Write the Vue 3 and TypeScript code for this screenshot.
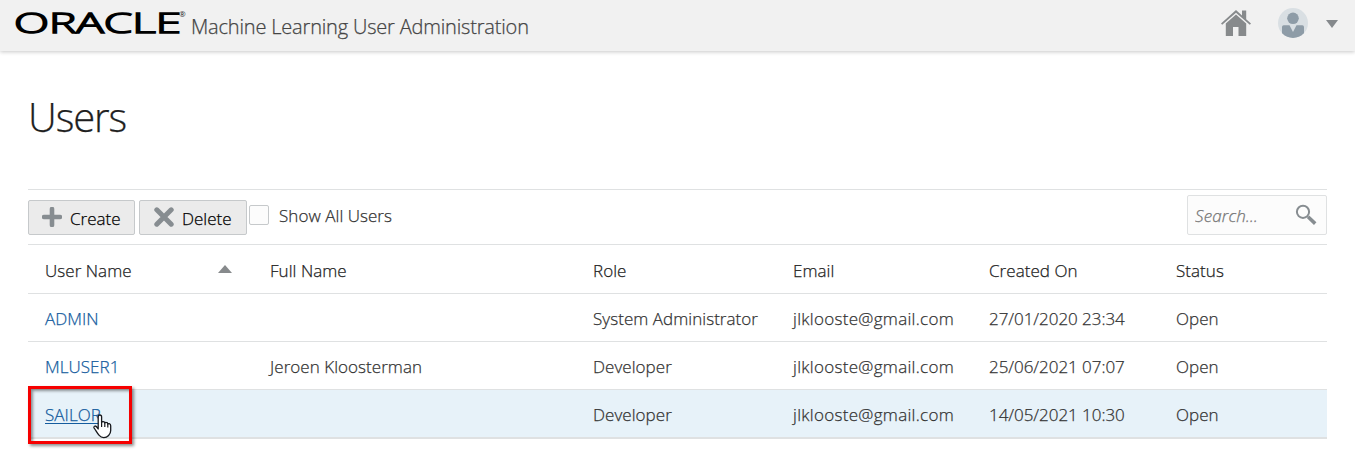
<script setup lang="ts">
import { ref } from 'vue'

interface User {
  name: string
  fullName: string
  role: string
  email: string
  created: string
  status: string
}

const users: User[] = [
  { name: 'ADMIN', fullName: '', role: 'System Administrator', email: 'jlklooste@gmail.com', created: '27/01/2020 23:34', status: 'Open' },
  { name: 'MLUSER1', fullName: 'Jeroen Kloosterman', role: 'Developer', email: 'jlklooste@gmail.com', created: '25/06/2021 07:07', status: 'Open' },
  { name: 'SAILOR', fullName: '', role: 'Developer', email: 'jlklooste@gmail.com', created: '14/05/2021 10:30', status: 'Open' },
]
const active = ref('SAILOR')
const showAll = ref(false)
</script>

<template>
  <div class="page">
    <header class="topbar">
      <svg class="logo" width="176" height="48" viewBox="0 0 176 48" role="img" aria-label="Oracle">
        <text class="wordmark" x="0" y="33" textLength="167" lengthAdjust="spacingAndGlyphs">ORACLE</text>
        <text class="mark" x="165" y="17">®</text>
      </svg>
      <span class="product">Machine Learning User Administration</span>
      <div class="tools">
        <svg class="home" width="30" height="27" viewBox="0 0 30 27" fill="#878a8c">
          <path d="M15 0 0 13.5 1.2 14.7 15 2.8 28.8 14.7 30 13.5 25.2 9.2V0.5H21V5.4Z" />
          <path d="M15 4.6 4.8 13.4V26H12V17H17.5V26H25.2V13.4Z" />
        </svg>
        <svg class="avatar" width="30" height="30" viewBox="0 0 30 30">
          <defs><clipPath id="disc"><circle cx="15" cy="15" r="15" /></clipPath></defs>
          <circle cx="15" cy="15" r="15" fill="#d9dfe3" />
          <g clip-path="url(#disc)" fill="#8e9ca7">
            <circle cx="15" cy="10.3" r="5.8" />
            <path d="M4 19Q4 17.3 5.7 17.3H11.5L15 24 18.5 17.3H24.3Q26 17.3 26 19V30H4Z" />
          </g>
        </svg>
        <svg class="caret" width="12" height="8" viewBox="0 0 12 8"><path d="M0 0H12L6 8Z" fill="#85898c" /></svg>
      </div>
    </header>

    <main>
      <h1>Users</h1>
      <div class="toolbar">
        <button class="btn" type="button">
          <svg width="20" height="20" viewBox="0 0 20 20"><path d="M10 2V18M2 10H18" stroke="#878d91" stroke-width="4.6" stroke-linecap="round" /></svg>
          <span>Create</span>
        </button>
        <button class="btn delete" type="button">
          <svg width="20" height="20" viewBox="0 0 20 20"><path d="M2.8 2.8 17.2 17.2M17.2 2.8 2.8 17.2" stroke="#878d91" stroke-width="5" stroke-linecap="round" /></svg>
          <span>Delete</span>
        </button>
        <label class="show-all">
          <input v-model="showAll" type="checkbox" />
          <span>Show All Users</span>
        </label>
        <div class="search">
          <input type="text" placeholder="Search..." aria-label="Search" />
          <svg width="22" height="22" viewBox="0 0 22 22" fill="none" stroke="#878d91">
            <circle cx="8" cy="7.8" r="6.1" stroke-width="2" />
            <path d="M13 12.8 20.2 19.6" stroke-width="3.6" />
          </svg>
        </div>
      </div>

      <div class="table">
        <div class="row head">
          <span class="sortable">User Name<svg width="14" height="8" viewBox="0 0 14 8"><path d="M0 8 7 0 14 8Z" fill="#878a8c" /></svg></span>
          <span>Full Name</span><span>Role</span><span>Email</span><span>Created On</span><span>Status</span>
        </div>
        <div v-for="u in users" :key="u.name" class="row" :class="{ active: u.name === active }">
          <a class="name">{{ u.name }}</a>
          <span>{{ u.fullName }}</span>
          <span>{{ u.role }}</span>
          <span class="email">{{ u.email }}</span>
          <span class="date">{{ u.created }}</span>
          <span>{{ u.status }}</span>
          <template v-if="u.name === active">
            <div class="marker"></div>
            <svg class="pointer" width="19" height="25" viewBox="0 0 19 25">
              <path d="M5.2 15V3Q5.2 1 6.9 1 8.6 1 8.6 3V8.5Q9 7.5 10.2 7.6 11.7 7.7 11.8 9 12.2 8.3 13.2 8.4 14.7 8.5 14.8 10 15.3 9.4 16.2 9.6 17.7 9.9 17.7 11.7V16.5Q17.7 19.4 15.6 21.5 13.6 23.6 10.8 23.6 8 23.6 6.2 21.4 4.3 19 3 16.8 1.9 15 1 13.8 0.6 12.5 2 12 3.3 11.8 5.2 15Z" fill="#fff" stroke="#17191d" stroke-width="1.3" stroke-linejoin="round" />
              <path d="M8.6 8.5V13M11.8 9V13M14.8 10V13.5" stroke="#17191d" stroke-width="1.2" />
            </svg>
          </template>
        </div>
      </div>
    </main>
  </div>
</template>

<style>
body { background: #fff; overflow: hidden; }
</style>

<style scoped>
.page {
  height: 455px;
  font-family: "Open Sans", "Noto Sans", sans-serif;
  font-size: 17px;
  font-weight: 300;
  letter-spacing: 0.05px;
  color: #333;
  -webkit-text-stroke: 0.25px;
}
.topbar {
  display: flex;
  align-items: flex-start;
  height: 51px;
  padding-left: 14px;
  background: #f1f1f1;
  box-shadow: 0 1px 4px rgba(0, 0, 0, 0.22);
}
.logo { flex: none; }
.wordmark {
  font: 300 28px "Open Sans", sans-serif;
  letter-spacing: 0;
  fill: #000;
  stroke: #000;
  stroke-width: 1.5px;
  -webkit-text-stroke: 1.5px #000;
}
.mark { font: 400 8px "Open Sans", sans-serif; letter-spacing: 0; fill: #222; -webkit-text-stroke: 0; }
.product {
  margin-left: 1px;
  font-size: 20px;
  line-height: 54px;
  letter-spacing: -0.18px;
  color: #444;
}
.tools { display: flex; margin-left: auto; padding-right: 17px; }
.home { margin: 10px -1px 0 0; }
.avatar { margin: 8px 0 0 28px; }
.caret { margin: 20px 0 0 18px; }
main { padding: 0 28px; }
h1 {
  margin: 0;
  height: 138px;
  padding-top: 38px;
  box-sizing: border-box;
  font-size: 40px;
  font-weight: 300;
  line-height: 56px;
  letter-spacing: -1.1px;
  color: #1f1f1f;
}
.toolbar {
  display: flex;
  align-items: flex-start;
  height: 54px;
  border-top: 1px solid #dfe1e2;
  border-bottom: 1px solid #dfe1e2;
}
.btn {
  display: flex;
  align-items: center;
  gap: 8px;
  box-sizing: border-box;
  width: 107px;
  height: 35px;
  margin: 10px 4px 0 0;
  padding: 0 0 0 13px;
  border: 1px solid #c6c9cb;
  border-radius: 2px;
  background: #ebebeb;
  color: #000;
  font: inherit;
  letter-spacing: 0;
}
.btn.delete { width: 108px; margin-right: 2px; padding-left: 14px; }
.btn svg { flex: none; margin-top: -2px; }
.btn span { padding-top: 2px; }
.show-all { display: flex; margin-top: 15px; }
.show-all input {
  appearance: none;
  width: 20px;
  height: 20px;
  margin: 0 10px 0 0;
  border: 1px solid #c6c9cb;
  border-radius: 2px;
  background: #fcfcfc;
}
.show-all span { line-height: 22px; }
.search {
  display: flex;
  align-items: center;
  box-sizing: border-box;
  width: 140px;
  height: 40px;
  margin: 5px 0 0 auto;
  padding-left: 7px;
  border: 1px solid #dfe1e2;
  border-radius: 2px;
  background: #fcfcfc;
}
.search input {
  width: 100px;
  height: 36px;
  padding: 0 0 0;
  border: 0;
  background: transparent;
  font: inherit;
  font-style: italic;
  letter-spacing: 0.15px;
}
.search input::placeholder { color: #757575; opacity: 1; }
.search svg { flex: none; margin-top: -1px; }
.row {
  position: relative;
  display: grid;
  grid-template-columns: 225px 323px 200px 196px 187px 1fr;
  height: 47px;
  padding-left: 17px;
  border-bottom: 1px solid #dfe1e2;
  line-height: 49px;
}
.head { height: 48px; line-height: 51px; color: #222; }
.sortable { display: flex; justify-content: space-between; padding-right: 38px; }
.sortable svg { margin-top: 20px; }
.name { color: #145c9e; }
.email { letter-spacing: 0.3px; }
.date { letter-spacing: -0.05px; }
.active { background: #e7f2f9; border-bottom-width: 2px; }
.active .name { text-decoration: underline; text-underline-offset: 2px; text-decoration-thickness: 1px; }
.marker {
  position: absolute;
  left: 0;
  top: -4px;
  box-sizing: border-box;
  width: 104px;
  height: 58px;
  border: 3px solid #f60000;
  box-shadow: 2px 2px 3px rgba(0, 0, 0, 0.45), inset 2px 2px 3px rgba(0, 0, 0, 0.4);
}
.pointer { position: absolute; left: 65px; top: 24px; }
</style>
